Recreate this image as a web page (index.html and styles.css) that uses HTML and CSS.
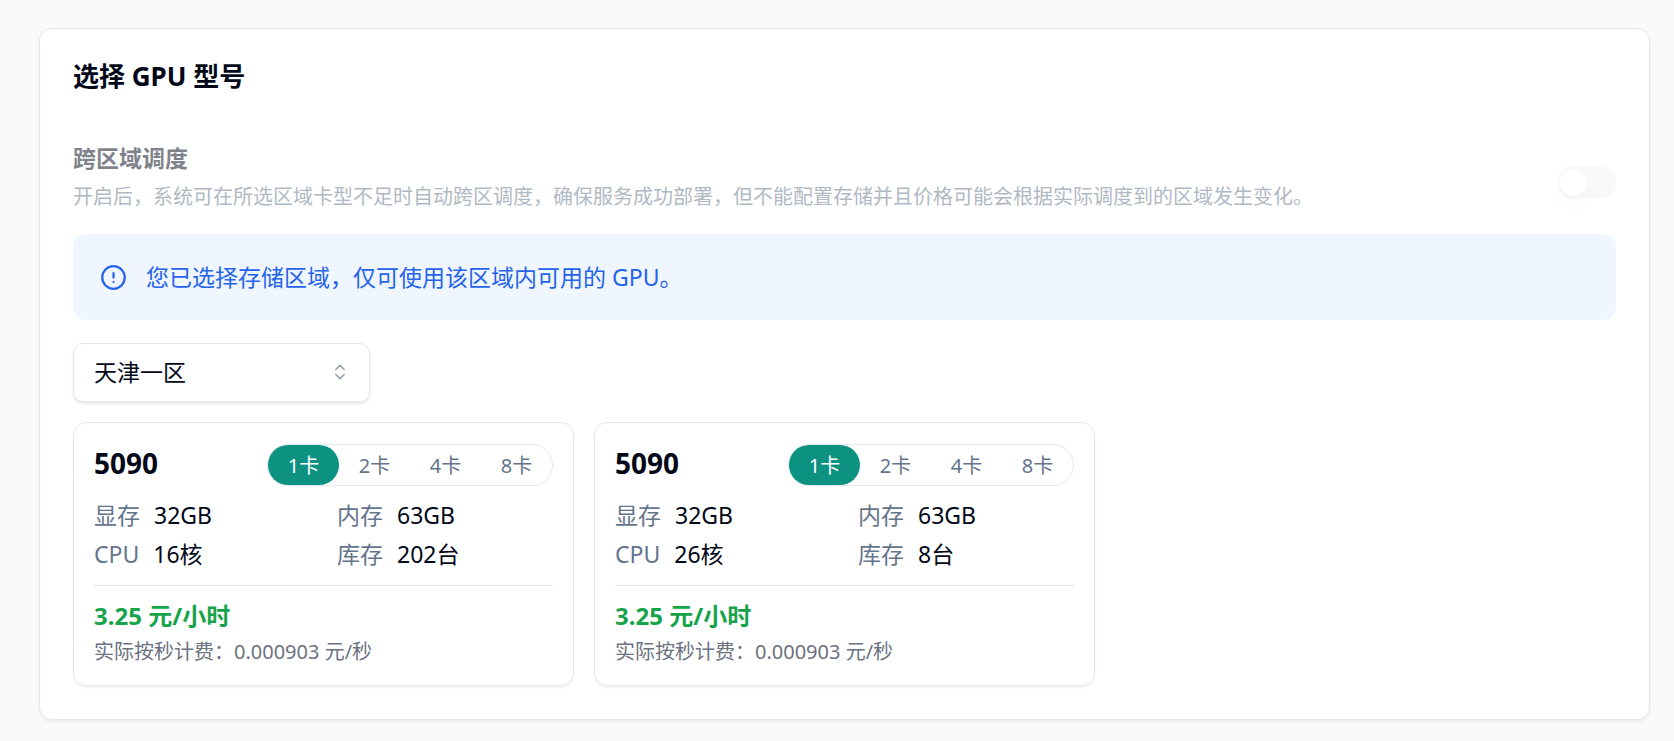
FILE: index.html
```html
<!DOCTYPE html>
<html lang="zh-CN">
<head>
  <meta charset="UTF-8">
  <title>选择 GPU 型号</title>
  <link rel="stylesheet" href="styles.css">
</head>
<body>
  <section class="panel">
    <h2 class="panel-title">选择 GPU 型号</h2>

    <div class="cross-region">
      <div class="cross-text">
        <label class="cross-label" for="crossRegion">跨区域调度</label>
        <p class="cross-desc">开启后，系统可在所选区域卡型不足时自动跨区调度，确保服务成功部署，但不能配置存储并且价格可能会根据实际调度到的区域发生变化。</p>
      </div>
      <input class="switch" type="checkbox" id="crossRegion" disabled>
    </div>

    <div class="notice">
      <svg class="notice-icon" viewBox="0 0 24 24" fill="none" stroke="currentColor" stroke-width="2" stroke-linecap="round" stroke-linejoin="round">
        <circle cx="12" cy="12" r="10"/>
        <line x1="12" y1="8" x2="12" y2="12"/>
        <line x1="12" y1="16" x2="12.01" y2="16"/>
      </svg>
      <p>您已选择存储区域，仅可使用该区域内可用的 GPU。</p>
    </div>

    <div class="region">
      <select class="region-select" aria-label="区域">
        <option>天津一区</option>
      </select>
      <svg class="region-icon" viewBox="0 0 24 24" fill="none" stroke="currentColor" stroke-width="2" stroke-linecap="round" stroke-linejoin="round">
        <path d="M7 15l5 5 5-5"/>
        <path d="M7 9l5-5 5 5"/>
      </svg>
    </div>

    <div class="gpu-list">
      <article class="gpu-card">
        <div class="gpu-head">
          <h3 class="gpu-name">5090</h3>
          <div class="count">
            <button type="button" class="count-btn active">1卡</button>
            <button type="button" class="count-btn">2卡</button>
            <button type="button" class="count-btn">4卡</button>
            <button type="button" class="count-btn">8卡</button>
          </div>
        </div>
        <dl class="specs">
          <div class="spec"><dt>显存</dt><dd>32GB</dd></div>
          <div class="spec"><dt>内存</dt><dd>63GB</dd></div>
          <div class="spec"><dt>CPU</dt><dd>16核</dd></div>
          <div class="spec"><dt>库存</dt><dd>202台</dd></div>
        </dl>
        <div class="price-box">
          <p class="price">3.25 元/小时</p>
          <p class="price-note">实际按秒计费：0.000903 元/秒</p>
        </div>
      </article>

      <article class="gpu-card">
        <div class="gpu-head">
          <h3 class="gpu-name">5090</h3>
          <div class="count">
            <button type="button" class="count-btn active">1卡</button>
            <button type="button" class="count-btn">2卡</button>
            <button type="button" class="count-btn">4卡</button>
            <button type="button" class="count-btn">8卡</button>
          </div>
        </div>
        <dl class="specs">
          <div class="spec"><dt>显存</dt><dd>32GB</dd></div>
          <div class="spec"><dt>内存</dt><dd>63GB</dd></div>
          <div class="spec"><dt>CPU</dt><dd>26核</dd></div>
          <div class="spec"><dt>库存</dt><dd>8台</dd></div>
        </dl>
        <div class="price-box">
          <p class="price">3.25 元/小时</p>
          <p class="price-note">实际按秒计费：0.000903 元/秒</p>
        </div>
      </article>
    </div>
  </section>

  <script>
    document.querySelectorAll('.count').forEach(group => {
      const buttons = group.querySelectorAll('.count-btn');
      buttons.forEach(btn => {
        btn.addEventListener('click', () => {
          buttons.forEach(b => b.classList.remove('active'));
          btn.classList.add('active');
        });
      });
    });
  </script>
</body>
</html>
```
FILE: styles.css
```css
* {
  box-sizing: border-box;
}
body {
  margin: 0;
  padding: 28px 24px 22px 39px;
  background-color: #fafafa;
  color: #020817;
  font-family: "Noto Sans", "Noto Sans CJK SC", sans-serif;
  font-size: 23px;
  line-height: 33px;
}
h2, h3, p, dl, dd {
  margin: 0;
}
.panel {
  padding: 33px;
  background-color: #fff;
  border: 1px solid #e2e8f0;
  border-radius: 13px;
  box-shadow: 0 2px 3px rgba(0, 0, 0, 0.05);
}
.panel-title {
  margin-bottom: 56px;
  font-size: 26px;
  font-weight: 700;
  line-height: 29px;
}
/* Cross region switch */
.cross-region {
  display: flex;
  justify-content: space-between;
  align-items: center;
  margin-bottom: 17px;
}
.cross-label {
  display: block;
  margin-bottom: 7px;
  font-weight: 700;
  line-height: 23px;
  opacity: 0.5;
}
.cross-desc {
  color: #64748b;
  font-size: 20px;
  line-height: 40px;
  opacity: 0.5;
}
.switch {
  appearance: none;
  flex-shrink: 0;
  width: 59px;
  height: 33px;
  margin: 0;
  padding: 3px;
  border-radius: 17px;
  background-color: #e2e8f0;
  opacity: 0.25;
}
.switch::before {
  content: "";
  display: block;
  width: 27px;
  height: 27px;
  border-radius: 50%;
  background-color: #fff;
  box-shadow: 0 10px 15px -3px rgba(0, 0, 0, 0.06), 0 4px 6px -3px rgba(0, 0, 0, 0.1);
}
.switch:checked::before {
  margin-left: 26px;
}
/* Notice */
.notice {
  display: flex;
  align-items: center;
  gap: 19px;
  margin-bottom: 23px;
  padding: 26px 27px;
  border-radius: 13px;
  background-color: #eff6ff;
  color: #2563eb;
  line-height: 34px;
}
.notice-icon {
  width: 27px;
  height: 27px;
}
/* Region select */
.region {
  position: relative;
  width: 297px;
  margin-bottom: 20px;
}
.region-select {
  appearance: none;
  display: block;
  width: 100%;
  height: 59px;
  padding: 0 54px 0 20px;
  border: 1px solid #e5e7eb;
  border-radius: 10px;
  background-color: #fff;
  color: inherit;
  font: inherit;
  box-shadow: 0 2px 3px rgba(0, 0, 0, 0.1);
}
.region-icon {
  position: absolute;
  top: 19px;
  right: 20px;
  width: 20px;
  height: 20px;
  color: #9ca3af;
  pointer-events: none;
}
/* GPU cards */
.gpu-list {
  display: grid;
  grid-template-columns: repeat(3, 1fr);
  gap: 20px;
}
.gpu-card {
  padding: 21px 20px 17px;
  border: 1px solid #e2e8f0;
  border-radius: 13px;
  box-shadow: 0 2px 3px rgba(0, 0, 0, 0.05);
}
.gpu-head {
  display: flex;
  justify-content: space-between;
  align-items: flex-start;
}
.gpu-name {
  font-size: 28px;
  font-weight: 700;
  line-height: 39px;
}
.count {
  display: flex;
  border: 1px solid #e2e8f0;
  border-radius: 21px;
}
.count-btn {
  width: 71px;
  height: 40px;
  padding: 0;
  border: 0;
  border-radius: 20px;
  background: none;
  color: #64748b;
  font: inherit;
  font-size: 20px;
  cursor: pointer;
}
.count-btn.active {
  background-color: #0d9282;
  color: #fff;
}
.specs {
  display: grid;
  grid-template-columns: 1fr 1fr;
  gap: 6px 27px;
  margin-top: 13px;
}
.spec {
  display: flex;
  gap: 14px;
}
.spec dt {
  color: #64748b;
}
.price-box {
  margin-top: 14px;
  padding-top: 13px;
  border-top: 1px solid #e2e8f0;
}
.price {
  color: #16a34a;
  font-size: 24px;
  font-weight: 700;
}
.price-note {
  margin-top: 3px;
  color: #6b7280;
  font-size: 20px;
}
```
